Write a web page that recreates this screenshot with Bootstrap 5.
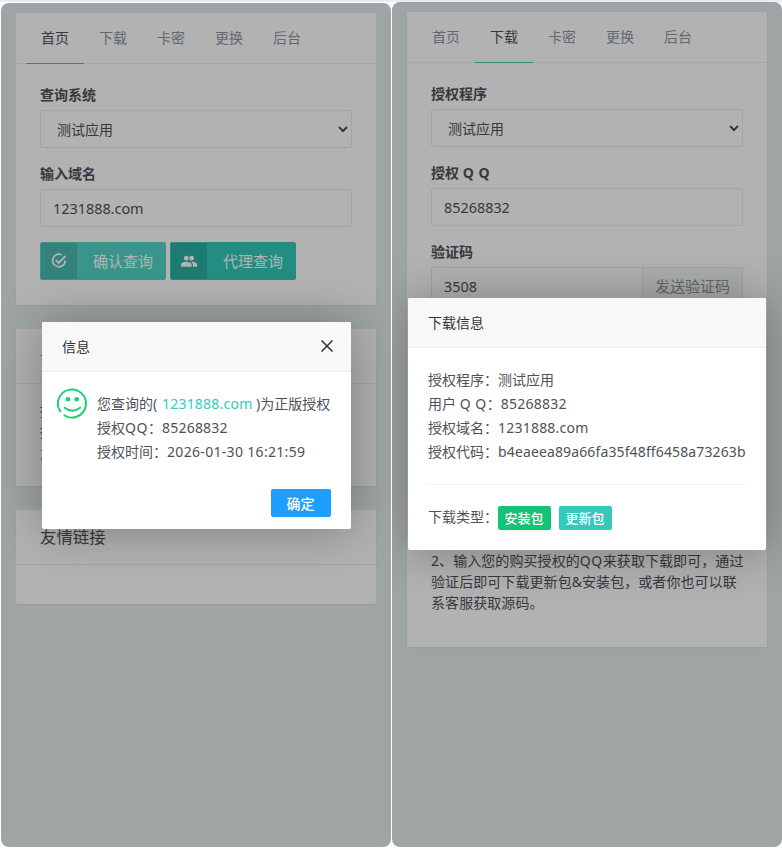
<!DOCTYPE html>
<html lang="zh-CN">
<head>
<meta charset="utf-8">
<title>授权查询</title>
<link href="https://cdn.jsdelivr.net/npm/bootstrap@5.3.0/dist/css/bootstrap.min.css" rel="stylesheet">
<style>
body{font-family:"Noto Sans","Noto Sans CJK SC",sans-serif;font-size:14px;line-height:21px;color:#4d5259;background:linear-gradient(#e6ebf3 1px,#fff 3px);height:848px;overflow:hidden}
.screens{padding:2px 1px 0;gap:1px}
.phone{width:390px;height:845px;border-radius:8px;background:#e4eceb;padding:10px 15px}
.phone.first{margin-top:1px;height:844px}
.veil{inset:0;background:rgba(0,0,0,.3)}
.panel{width:360px;background:#fff;box-shadow:0 1px 2px rgba(0,0,0,.05);margin-bottom:24px}
.tabs{height:51px;border-bottom:1px solid #ebebeb;padding-left:10px}
.tabs .nav-link{width:58px;height:51px;padding:0;line-height:50px;text-align:center;color:#8b95a5;border-bottom:1px solid transparent}
.tabs .nav-link.active{color:#4d5259;border-color:#33cabb}
.inner{padding:20px 24px 25px}
.inner label{display:block;font-weight:700;color:#4d5259;margin-bottom:5px;line-height:21px}
.phone .form-control{height:38px;border:1px solid #ebebeb;border-radius:2px;font-size:14.4px;line-height:24px;padding:6px 12px;color:#4d5259;background:#fff}
.phone select.form-control{appearance:auto;font-size:14px;padding:5px 0 5px 12px}
.field{margin-bottom:15px}
.act{width:126px;height:38px;border-radius:2px;padding:0;background:#33cabb;border:1px solid #33cabb;color:#fff;font-size:15px;overflow:hidden}
.act.soft{background:#54d5c9;border-color:#54d5c9}
.act .ico{width:36px;height:36px;background:rgba(0,0,0,.12)}
.send{width:101px;border:1px solid #ebebeb;background:#f6f9f9;color:#8b95a5;font-size:15px;padding:0;border-radius:0 2px 2px 0}
.code-input{border-right:0!important}
.head{height:55px;line-height:54px;border-bottom:1px solid #ebebeb;padding:0 24px;font-size:16.4px}
.notice-a{padding-top:16px;padding-bottom:23px}
.notice-b{padding:206px 20px 34px 24px;letter-spacing:.07px}
.links-empty{height:39px}
.dlg{background:#fff;border-radius:2px;box-shadow:1px 1px 50px rgba(0,0,0,.3);line-height:24px;color:#4d5259}
.dlg-head{height:50px;line-height:49px;background:#f8f8f8;border-bottom:1px solid #eee;padding:0 20px;color:#333;border-radius:2px 2px 0 0}
.dlg-a{left:41px;top:319px;width:309px;height:207px}
.dlg-b{left:16px;top:296px;width:358px;height:252px}
.lt{letter-spacing:.22px}
.dt{letter-spacing:.32px}
.qq{letter-spacing:.55px}
.code{letter-spacing:.13px}
.rule{border-top:1px solid #f3f3f3;margin:20px 0}
.teal{color:#33cabb}
.ok{width:60px;height:28px;background:#1e9fff;color:#fff;border-radius:2px;line-height:28px;padding:1px 1px 0 0;font-size:14px;border:0;font-weight:500}
.mini{height:24px;width:53px;border:0;border-radius:2px;color:#fff;padding:0 1px 0 0;margin-top:1px;font-size:13px;line-height:24px;font-weight:500}
.g{background:#15c377}.t{background:#33cabb}
</style>
<script src="https://cdn.jsdelivr.net/npm/bootstrap@5.3.0/dist/js/bootstrap.bundle.min.js"></script>
</head>
<body>
<main class="screens d-flex align-items-start">
  <section class="phone first position-relative overflow-hidden flex-shrink-0">
    <div class="panel">
      <nav class="tabs nav flex-nowrap"><a class="nav-link active">首页</a><a class="nav-link">下载</a><a class="nav-link">卡密</a><a class="nav-link">更换</a><a class="nav-link">后台</a></nav>
      <div class="inner">
        <div class="field"><label>查询系统</label><select class="form-control"><option>测试应用</option></select></div>
        <div class="field"><label>输入域名</label><input class="form-control" value="1231888.com"></div>
        <div class="d-flex gap-1">
          <button class="btn act soft d-flex"><span class="ico d-flex align-items-center justify-content-center"><svg width="16" height="16" viewBox="0 0 16 16" fill="none" stroke="#fff" stroke-width="1.8"><path d="M10.6 1.8A6.3 6.3 0 1 0 14.2 7.5M4.8 7.2l2.8 2.8L14.6 3"/></svg></span><span class="flex-grow-1 align-self-center ps-1">确认查询</span></button>
          <button class="btn act d-flex"><span class="ico d-flex align-items-center justify-content-center"><svg width="16" height="16" viewBox="0 0 24 24" fill="#fff"><path d="M16 11.500a3.600 3.600 0 1 0 0-7.200 3.600 3.600 0 0 0 0 7.200zM8 11.500a3.600 3.600 0 1 0 0-7.200 3.600 3.600 0 0 0 0 7.200zM8 13.300c-2.700 0-8 1.300-8 4V20.500h16v-3.200c0-2.700-5.300-4-8-4zM16 13.300l-1 .1c1.700 1 2.800 2.200 2.800 3.900v3.200H24v-3.200c0-2.700-5.300-4-8-4z"/></svg></span><span class="flex-grow-1 align-self-center ps-1">代理查询</span></button>
        </div>
      </div>
    </div>
    <div class="panel">
      <div class="head">公告</div>
      <div class="inner notice-a">授<br>授<br>为</div>
    </div>
    <div class="panel"><div class="head">友情链接</div><div class="links-empty"></div></div>
    <div class="veil position-absolute"></div>
    <div class="dlg dlg-a position-absolute">
      <div class="dlg-head d-flex justify-content-between"><span>信息</span><svg class="align-self-center" width="12" height="12" viewBox="0 0 12 12" stroke="#2d3038" stroke-width="1.5" style="margin:-2px -2px 0 0"><path d="M.5.500l11 11M11.500.500l-11 11"/></svg></div>
      <div class="d-flex" style="padding:20px 0 0 15px">
        <svg width="31" height="31" viewBox="0 0 31 31" fill="none" stroke="#16d16c" style="margin:-4px 9px 0 0"><path d="M3.800 24A14 14 0 1 1 6.800 26.900" stroke-width="1.900"/><path d="M7.700 19.700q7.500 6 15.500 0" stroke-width="2" stroke-linecap="round"/><circle cx="11" cy="11.300" r="2.300" fill="#16d16c" stroke="none"/><circle cx="19.700" cy="11.300" r="2.300" fill="#16d16c" stroke="none"/></svg>
        <div class="text-nowrap">您查询的<span class="qq">( </span><span class="lt teal">1231888.com</span> )为正版授权<br>授权<span class="qq">QQ</span>：<span class="lt">85268832</span><br>授权时间：<span class="dt">2026-01-30 16:21:59</span></div>
      </div>
      <div class="d-flex justify-content-end" style="padding:25px 20px 0 0"><button class="btn ok">确定</button></div>
    </div>
  </section>
  <section class="phone position-relative overflow-hidden flex-shrink-0">
    <div class="panel">
      <nav class="tabs nav flex-nowrap"><a class="nav-link">首页</a><a class="nav-link active">下载</a><a class="nav-link">卡密</a><a class="nav-link">更换</a><a class="nav-link">后台</a></nav>
      <div class="inner pb-4">
        <div class="field"><label>授权程序</label><select class="form-control"><option>测试应用</option></select></div>
        <div class="field"><label>授权 <span class="qq">Q Q</span></label><input class="form-control" value="85268832"></div>
        <div class="field"><label>验证码</label><div class="d-flex"><input class="form-control code-input rounded-end-0" value="3508"><button class="btn send flex-shrink-0">发送验证码</button></div></div>
      </div>
      <div class="notice-b">2、输入您的购买授权的<span class="qq">QQ</span>来获取下载即可，通过验证后即可下载更新包&amp;安装包，或者你也可以联系客服获取源码。</div>
    </div>
    <div class="veil position-absolute"></div>
    <div class="dlg dlg-b position-absolute">
      <div class="dlg-head">下载信息</div>
      <div class="text-nowrap" style="padding:20px 20px 0">授权程序：测试应用<br>用户 <span class="qq">Q Q</span>：<span class="lt">85268832</span><br>授权域名：<span class="lt">1231888.com</span><br>授权代码：<span class="code">b4eaeea89a66fa35f48ff6458a73263b</span>
        <div class="rule"></div>
        <div class="d-flex"><span>下载类型：</span><button class="btn mini g me-2">安装包</button><button class="btn mini t">更新包</button></div>
      </div>
    </div>
  </section>
</main>
</body>
</html>
